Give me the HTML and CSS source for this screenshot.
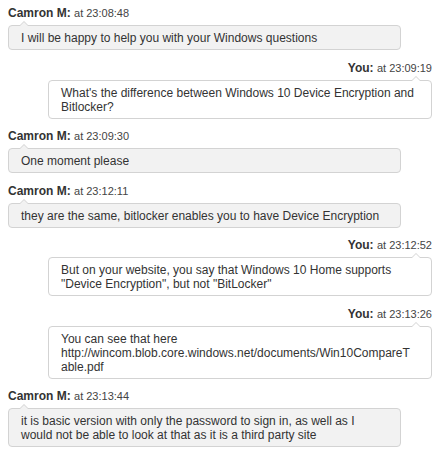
FILE: index.html
```html
<!DOCTYPE html>
<html>
  <head>
    <meta charset="utf8">
    <title>Chat transcript</title>
    <link rel="stylesheet" href="styles.css">
  </head>
  <body>

    <div class="chat">

      <div class="msg agent">
        <div class="msg-head"><b>Camron M:</b> <span class="time">at 23:08:48</span></div>
        <div class="bubble">I will be happy to help you with your Windows questions</div>
      </div>

      <div class="msg you">
        <div class="msg-head"><b>You:</b> <span class="time">at 23:09:19</span></div>
        <div class="bubble">What's the difference between Windows 10 Device Encryption and Bitlocker?</div>
      </div>

      <div class="msg agent">
        <div class="msg-head"><b>Camron M:</b> <span class="time">at 23:09:30</span></div>
        <div class="bubble">One moment please</div>
      </div>

      <div class="msg agent">
        <div class="msg-head"><b>Camron M:</b> <span class="time">at 23:12:11</span></div>
        <div class="bubble">they are the same, bitlocker enables you to have Device Encryption</div>
      </div>

      <div class="msg you">
        <div class="msg-head"><b>You:</b> <span class="time">at 23:12:52</span></div>
        <div class="bubble">But on your website, you say that Windows 10 Home supports "Device Encryption", but not "BitLocker"</div>
      </div>

      <div class="msg you">
        <div class="msg-head"><b>You:</b> <span class="time">at 23:13:26</span></div>
        <div class="bubble">You can see that here http://wincom.blob.core.windows.net/documents/Win10CompareTable.pdf</div>
      </div>

      <div class="msg agent">
        <div class="msg-head"><b>Camron M:</b> <span class="time">at 23:13:44</span></div>
        <div class="bubble">it is basic version with only the password to sign in, as well as I would not be able to look at that as it is a third party site</div>
      </div>

    </div>
  </body>
</html>
```

FILE: styles.css
```css
body {
  margin: 0;
  background: #ffffff;
  font-family: "Liberation Sans", Arial, sans-serif;
  font-size: 12px;
  color: #333333;
}

div.chat {
  padding: 6px 9px 0 8px;
}

div.msg {
  display: flex;
  flex-direction: column;
  margin-bottom: 10.5px;
}

div.msg-head {
  line-height: 14px;
  margin-bottom: 5px;
}

div.msg-head b {
  color: #333333;
}

span.time {
  font-size: 11px;
  color: #444444;
}

div.bubble {
  position: relative;
  line-height: 14px;
  padding: 5px 16px 4px 12px;
  border: 1px solid #d3d3d3;
  border-radius: 4px;
  overflow-wrap: anywhere;
}

/* little pointer on the bubble's top edge */
div.bubble::before,
div.bubble::after {
  content: "";
  position: absolute;
  width: 0;
  height: 0;
  border-style: solid;
  border-color: transparent;
}

div.bubble::before {
  top: -5px;
  border-width: 0 5px 5px 5px;
  border-bottom-color: #d3d3d3;
}

div.bubble::after {
  top: -4px;
  border-width: 0 4px 4px 4px;
}

/* agent messages: grey, left side */
div.agent .bubble {
  background: #f2f2f2;
  margin-right: 31px;
}

div.agent .bubble::before {
  left: 10px;
}

div.agent .bubble::after {
  left: 11px;
  border-bottom-color: #f2f2f2;
}

/* own messages: white, right side */
div.you .msg-head {
  text-align: right;
}

div.you .bubble {
  background: #ffffff;
  margin-left: 40px;
}

div.you .bubble::before {
  right: 10px;
}

div.you .bubble::after {
  right: 11px;
  border-bottom-color: #ffffff;
}
```
